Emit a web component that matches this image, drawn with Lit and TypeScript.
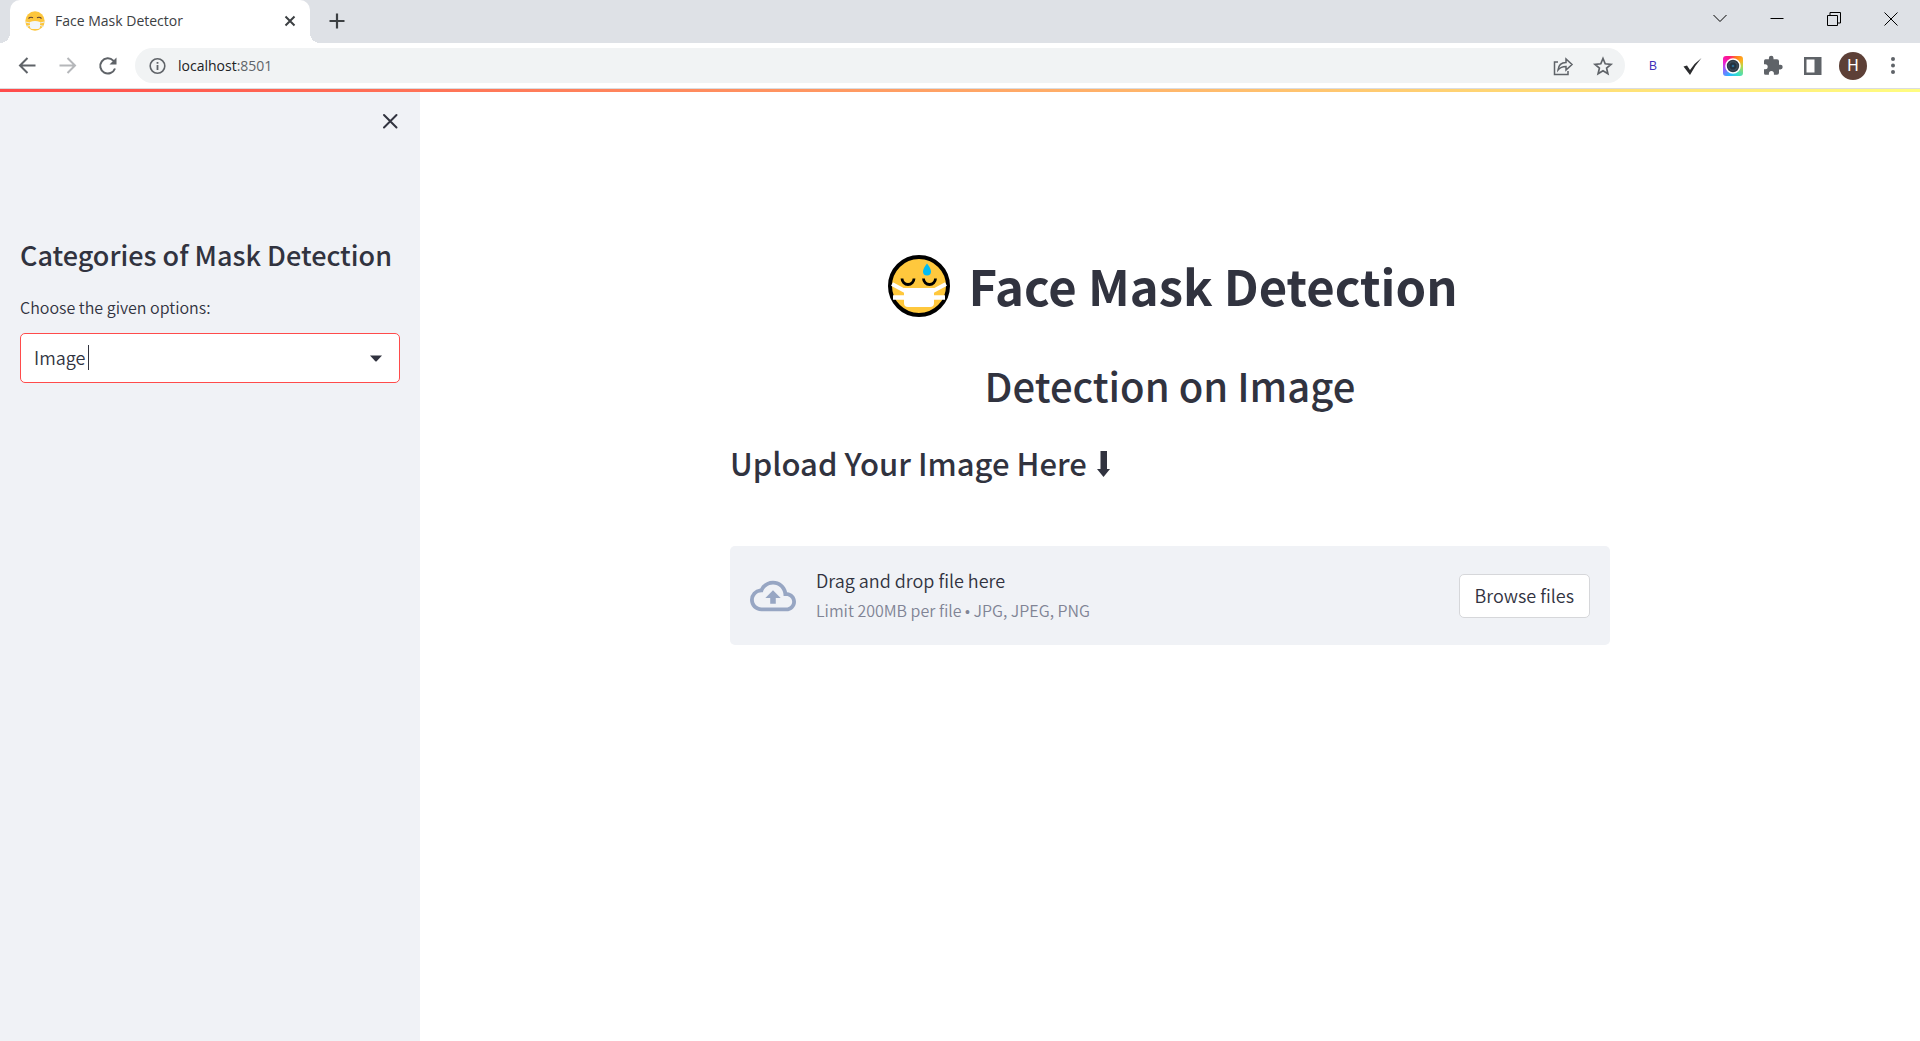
import { LitElement, html, css, svg } from "lit";
import { customElement, state } from "lit/decorators.js";

const maskFace = html`<svg class="face" viewBox="0 0 62 62" aria-hidden="true">
  <circle cx="31" cy="31" r="29" fill="#ffc83d" stroke="#000" stroke-width="4" />
  <path d="M4 29 L17 36 M58 29 L45 36" stroke="#fff" stroke-width="4" fill="none" />
  <path d="M5 42.500H57" stroke="#fff" stroke-width="4.500" />
  <path d="M16 33H46V48q0 4-4 4H20q-4 0-4-4Z" fill="#fff" />
  <path d="M14 23.500a6 6 0 0 0 12 0M35.500 23.500a6 6 0 0 0 12 0" fill="none" stroke="#000" stroke-width="2.800" />
  <path d="M39 8.500q4 5 4 8a4 4 0 0 1-8 0q0-3 4-8Z" fill="#00bcf2" />
</svg>`;

const favicon = html`<svg class="favicon" viewBox="0 0 20 20" aria-hidden="true">
  <circle cx="10" cy="10" r="9.700" fill="#fdc63c" />
  <path d="M3.500 7.500q2-2 4.500-.8M16.500 7.500q-2-2-4.500-.8" fill="none" stroke="#5d4037" stroke-width="1.100" />
  <path d="M.5 11 5 12M19.500 11 15 12M1 15.500 5 14.500M19 15.500 15 14.500" stroke="#e8eef3" stroke-width="1" />
  <path d="M5 11q5-2 10 0v5q0 2-2 2H7q-2 0-2-2Z" fill="#f3f6f9" />
</svg>`;

const icon = (cls: string, label: string, body: unknown) => html`
  <button class="icon-btn ${cls}" type="button" aria-label=${label}>
    <svg viewBox="0 0 24 24" aria-hidden="true">${body}</svg>
  </button>`;

@customElement("browser-chrome")
export class BrowserChrome extends LitElement {
  static styles = css`
    :host { display: block; font-family: "Open Sans", "Noto Sans", sans-serif; font-weight: 400; color: #3c4043; }
    * { box-sizing: border-box; }
    button { border: 0; padding: 0; background: none; color: inherit; display: grid; place-items: center; flex: none; }
    svg { display: block; width: 100%; height: 100%; }
    .strip { height: 43px; background: #dee1e6; display: flex; padding: 0 1px 0 10px; }
    .tab { position: relative; width: 300px; background: #fff; border-radius: 10px 10px 0 0; display: flex; align-items: center; padding: 0 12px 1px 15px; gap: 10px; }
    .tab::before, .tab::after { content: ""; position: absolute; bottom: 0; width: 10px; height: 10px; }
    .tab::before { right: 100%; background: radial-gradient(circle at 0 0, transparent 10px, #fff 10px); }
    .tab::after { left: 100%; background: radial-gradient(circle at 100% 0, transparent 10px, #fff 10px); }
    .favicon { width: 20px; height: 20px; flex: none; }
    .title { flex: 1; font-size: 14px; line-height: 20px; padding-bottom: 1px; white-space: nowrap; }
    .close { width: 16px; height: 16px; }
    .new { width: 24px; height: 24px; margin: 9px 0 0 15px; }
    .window { margin-left: auto; display: flex; }
    .window button { width: 57px; height: 37px; color: #000; }
    .window svg { width: 14px; height: 14px; }
    .bar { height: 46px; border-bottom: 1px solid #dadce0; display: flex; align-items: center; padding: 0 15px 0 16px; }
    .nav { display: flex; gap: 16px; margin-right: 15px; }
    .icon-btn { width: 24px; height: 24px; color: #5f6368; }
    .off { color: #b5b7ba; }
    .address { flex: 1; height: 35px; border-radius: 18px; background: #f1f3f4; display: flex; align-items: center; padding: 0 10px; gap: 16px; }
    .site { display: flex; align-items: center; gap: 9px; flex: 1; }
    .url { font-size: 14px; line-height: 20px; color: #202124; }
    .port { color: #5f6368; }
    .tools { display: flex; align-items: center; gap: 16px; margin-left: 16px; }
    .avatar { width: 28px; height: 28px; border-radius: 50%; background: #5d4037; color: #fff; font: 400 16px/28px Roboto, sans-serif; margin: 0 -2px; }
    .b { color: #3f30b8; font: 12px "Liberation Sans", sans-serif; }
    .camera { width: 20px; height: 20px; margin: 0 2px; border-radius: 3px; background: conic-gradient(from 20deg, #ff7a1a, #ffb01f 10%, #b8d84a 20%, #35e0c8 36%, #25b9ff 50%, #9a5cff 64%, #f01ccb 76%, #ff1683 88%, #ff7a1a); }
  `;
  render() {
    return html`
      <div class="strip">
        <div class="tab">
          ${favicon}<span class="title">Face Mask Detector</span>
          <button class="close" type="button" aria-label="Close tab"><svg viewBox="0 0 16 16"><path d="M3.500 3.500l9 9m0-9l-9 9" stroke="#3c4043" stroke-width="2" /></svg></button>
        </div>
        <button class="new" type="button" aria-label="New tab"><svg viewBox="0 0 24 24"><path d="M12 4.500v15M4.500 12h15" stroke="#3c4043" stroke-width="2.200" /></svg></button>
        <div class="window">
          <button type="button" aria-label="Search tabs"><svg viewBox="0 0 14 14"><path d="M.5 3l6.500 6.500L13.500 3" fill="none" stroke="currentColor" /></svg></button>
          <button type="button" aria-label="Minimize"><svg viewBox="0 0 14 14"><path d="M.5 6.500h13" stroke="currentColor" /></svg></button>
          <button type="button" aria-label="Restore"><svg viewBox="0 0 14 14"><path d="M.5 3.500h10v10H.5ZM3 3V.500h10.500V11H11" fill="none" stroke="currentColor" /></svg></button>
          <button type="button" aria-label="Close"><svg viewBox="0 0 14 14"><path d="M.5.5l13 13m0-13l-13 13" stroke="currentColor" /></svg></button>
        </div>
      </div>
      <div class="bar">
        <div class="nav">
          ${icon("", "Back", svg`<path d="M19.500 11.500H4.500M11.500 4 4 11.500l7.500 7.500" fill="none" stroke="currentColor" stroke-width="2"/>`)}
          ${icon("off", "Forward", svg`<path d="M3.500 11.500h15M11.500 4l7.500 7.500-7.500 7.500" fill="none" stroke="currentColor" stroke-width="2"/>`)}
          ${icon("", "Reload", svg`<path d="M19 14.500A7.600 7.600 0 1 1 17.300 6.600L19 8.300" fill="none" stroke="currentColor" stroke-width="2"/><path d="M20.500 3.500V10.500h-7Z" fill="currentColor"/>`)}
        </div>
        <div class="address">
          <div class="site">
            ${icon("", "Site information", svg`<circle cx="12.500" cy="12" r="7.300" fill="none" stroke="currentColor" stroke-width="1.600"/><path d="M12.500 11v5M12.500 8v1.800" stroke="currentColor" stroke-width="1.800"/>`)}
            <span class="url">localhost<span class="port">:8501</span></span>
          </div>
          ${icon("", "Share", svg`<path d="M7 8H3.500v12.500h13.500v-3.500" fill="none" stroke="currentColor" stroke-width="1.500"/><path d="M7 16c.5-4.500 3-7.500 8-7.500V5l6 5.500-6 5.500v-3.500c-4 0-6 1-8 3.500Z" fill="none" stroke="currentColor" stroke-width="1.500"/>`)}
          ${icon("", "Bookmark", svg`<path d="M12 4.500l2.200 5.300 5.800.5-4.400 3.800 1.300 5.600L12 16.700l-4.900 3 1.300-5.600L4 10.300l5.800-.5Z" fill="none" stroke="currentColor" stroke-width="1.700"/>`)}
        </div>
        <div class="tools">
          <button class="icon-btn b" type="button">B</button>
          ${icon("", "Tasks", svg`<path d="M2.500 12.500l3.500-1 3 4.500Q13.500 9 20.500 4 13.500 12 9 21Z" fill="#2b2c2e"/>`)}
          <button class="camera" type="button" aria-label="Screen capture">
            <svg viewBox="0 0 20 20" aria-hidden="true"><circle cx="10" cy="10" r="7" fill="#2f3b48" stroke="#fff" stroke-width="1.600"/><circle cx="10" cy="10" r="4.200" fill="#243240" stroke="#4a5a68" stroke-width=".8"/><circle cx="10" cy="10" r="1.300" fill="#2b6b94"/></svg>
          </button>
          ${icon("", "Extensions", svg`<path d="M19.400 10.800H18V7.200q0-2-2-2h-3.500V4a2.300 2.300 0 0 0-4.600 0v1.200H4.500Q3 5.200 3 7v3.300h1.200a2.500 2.500 0 0 1 0 5H3v4q0 1.500 1.500 1.500h3.400v-1.200a2.500 2.500 0 0 1 5 0v1.200H16q2 0 2-2v-3.400h1.400a2.300 2.300 0 0 0 0-4.600Z" fill="currentColor"/>`)}
          ${icon("", "Side panel", svg`<path d="M3 3h17.500v18H3ZM5.500 5.500v13h8v-13Z" fill="currentColor" fill-rule="evenodd"/>`)}
          <button class="avatar" type="button">H</button>
          ${icon("", "Menu", svg`<circle cx="12" cy="5" r="2" fill="currentColor"/><circle cx="12" cy="11.500" r="2" fill="currentColor"/><circle cx="12" cy="18" r="2" fill="currentColor"/>`)}
        </div>
      </div>`;
  }
}

@customElement("app-root")
export class AppRoot extends LitElement {
  @state() private option = "Image";

  static styles = css`
    :host { display: flex; flex-direction: column; min-height: 100vh; background: #fff; color: #31333f; font-family: "Noto Sans CJK SC", sans-serif; font-weight: 350; }
    * { box-sizing: border-box; }
    h1, h2, h3, p { margin: 0; }
    svg { display: block; }
    .page { position: relative; flex: 1; display: flex; }
    .decoration { position: absolute; inset: 0 0 auto; height: 3px; background: linear-gradient(90deg, #ff4b4b, #fffd80); }
    .sidebar { flex: none; width: 420px; background: #f0f2f6; padding: 20px; }
    .collapse { display: block; width: 24px; height: 24px; margin: 0 -2px 0 auto; padding: 0; border: 0; background: none; color: inherit; }
    .sidebar h2 { margin-top: 104px; font-size: 27px; line-height: 36px; font-weight: 500; white-space: nowrap; }
    .label { display: block; margin-top: 20px; font-size: 16px; line-height: 28px; }
    .select { position: relative; margin-top: 12px; height: 50px; border: 1px solid #ff4b4b; border-radius: 5px; background: #fff; }
    select { width: 100%; height: 100%; padding: 0 13px 2px; border: 0; outline: 0; border-radius: 4px; background: none; appearance: none; color: inherit; font: inherit; font-size: 18px; }
    .arrow { position: absolute; right: 17px; top: 21px; width: 12px; height: 7px; pointer-events: none; }
    .caret { position: absolute; left: 67px; top: 11px; width: 1px; height: 25px; background: #31333f; }
    main { flex: 1; display: flex; justify-content: center; padding: 160px 20px 0; }
    .block { flex: 1; max-width: 880px; min-width: 0; }
    .block h1 { display: flex; justify-content: center; align-items: center; gap: 18px; padding-left: 6px; font-size: 49px; line-height: 72px; font-weight: 700; }
    .face { width: 62px; height: 62px; margin-top: 2px; }
    .block h2 { margin-top: 37px; font-size: 40px; line-height: 54px; font-weight: 500; text-align: center; }
    .block h3 { display: flex; align-items: center; gap: 10px; margin-top: 30px; font-size: 31px; line-height: 42px; font-weight: 500; }
    .down { width: 13px; height: 26px; margin-top: 2px; }
    .drop { margin-top: 62px; padding: 20px; border-radius: 5px; background: #f0f2f6; display: flex; align-items: center; gap: 20px; }
    .cloud { flex: none; width: 46px; height: 46px; color: #97a6c3; }
    .text { flex: 1; }
    .text p { font-size: 18px; line-height: 29px; }
    .text .limit { font-size: 16px; line-height: 30px; color: #808495; }
    .dot { font: 14px/14px "Liberation Sans", sans-serif; }
    .browse { height: 44px; padding: 0 15px 2px; border: 1px solid #d6d7da; border-radius: 5px; background: #fff; color: inherit; font: inherit; font-size: 18px; line-height: 26px; }
  `;

  private pick(e: Event) {
    this.option = (e.target as HTMLSelectElement).value;
  }

  render() {
    return html`
      <browser-chrome></browser-chrome>
      <div class="page">
        <aside class="sidebar">
          <button class="collapse" type="button" aria-label="Close sidebar">
            <svg viewBox="0 0 24 24"><path d="M6 6l12.500 12.500m0-12.500l-12.500 12.500" stroke="currentColor" stroke-width="2" stroke-linecap="round" /></svg>
          </button>
          <h2>Categories of Mask Detection</h2>
          <label class="label" for="category">Choose the given options:</label>
          <div class="select">
            <select id="category" @change=${this.pick}>
              <option>${this.option}</option>
            </select>
            <span class="caret"></span>
            <svg class="arrow" viewBox="0 0 12 7" aria-hidden="true"><path d="M0 0.500H12L6.700 6.200q-.7.600-1.400 0Z" fill="#31333f" /></svg>
          </div>
        </aside>
        <main>
          <div class="block">
            <h1>${maskFace}<span>Face Mask Detection</span></h1>
            <h2>Detection on ${this.option}</h2>
            <h3>
              <span>Upload Your Image Here</span>
              <svg class="down" viewBox="0 0 13 26" aria-hidden="true"><path d="M3.500 0h6.500v18H13L6.500 26 0 18H3.500Z" fill="currentColor" /></svg>
            </h3>
            <section class="drop" aria-label="File upload">
              <svg class="cloud" viewBox="0 0 24 24" aria-hidden="true"><path d="M19.350 10.040A7.490 7.490 0 0 0 12 4C9.110 4 6.600 5.640 5.350 8.040A5.994 5.994 0 0 0 0 14c0 3.310 2.690 6 6 6h13c2.760 0 5-2.240 5-5 0-2.640-2.050-4.780-4.650-4.960ZM19 18H6c-2.210 0-4-1.790-4-4s1.790-4 4-4h.710C7.370 7.690 9.480 6 12 6c3.040 0 5.500 2.460 5.500 5.500v.5H19c1.660 0 3 1.340 3 3s-1.340 3-3 3ZM8 13h2.550v3h2.900v-3H16l-4-4Z" fill="currentColor" /></svg>
              <div class="text">
                <p>Drag and drop file here</p>
                <p class="limit">Limit 200MB per file <span class="dot">•</span> JPG, JPEG, PNG</p>
              </div>
              <button class="browse" type="button">Browse files</button>
            </section>
          </div>
        </main>
        <div class="decoration"></div>
      </div>`;
  }
}
